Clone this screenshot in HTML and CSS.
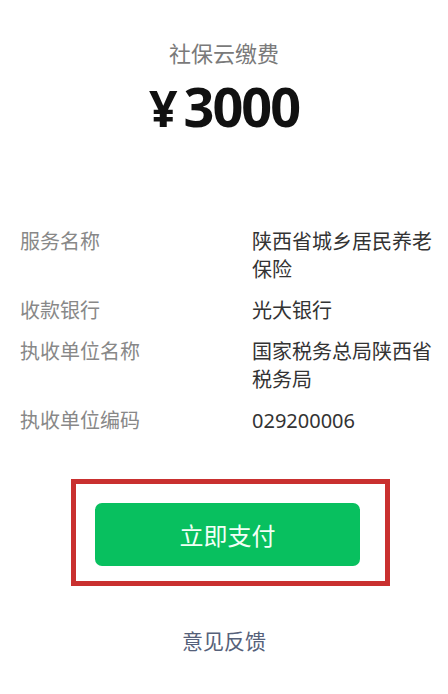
FILE: index.html
```html
<!DOCTYPE html>
<html lang="zh-CN">
<head>
  <meta charset="UTF-8" />
  <meta name="viewport" content="width=device-width, initial-scale=1.0" />
  <title>社保云缴费</title>
  <link rel="stylesheet" href="styles.css">
</head>
<body>
  <div class="head">
    <div class="title">社保云缴费</div>
    <div class="amount"><span class="yen">¥</span>3000</div>
  </div>

  <div class="info">
    <div class="row"><span class="label">服务名称</span><span class="value">陕西省城乡居民养老保险</span></div>
    <div class="row"><span class="label">收款银行</span><span class="value">光大银行</span></div>
    <div class="row"><span class="label">执收单位名称</span><span class="value">国家税务总局陕西省税务局</span></div>
    <div class="row"><span class="label">执收单位编码</span><span class="value">029200006</span></div>
  </div>

  <div class="highlight">
    <button class="pay">立即支付</button>
  </div>

  <div class="feedback">意见反馈</div>
</body>
</html>
```

FILE: styles.css
```css
body {
  margin: 0;
  background: #fff;
  font-family: "Noto Sans", "Noto Sans CJK SC", sans-serif;
}
.head {
  padding-top: 38px;
  text-align: center;
}
.title {
  font-size: 22px;
  line-height: 30px;
  color: #7a7a7a;
}
.amount {
  margin-top: 8px;
  font-size: 54px;
  line-height: 60px;
  font-weight: bold;
  color: #111;
  letter-spacing: -2px;
}
.yen {
  margin-right: 8px;
  font-size: 50px;
}
.info {
  margin-top: 90px;
  padding-left: 20px;
  display: flex;
  flex-direction: column;
  gap: 13px;
}
.row {
  display: flex;
  font-size: 20px;
  line-height: 28px;
}
.label {
  width: 232px;
  flex-shrink: 0;
  color: #888;
}
.value {
  width: 190px;
  color: #333;
}
.highlight {
  box-sizing: border-box;
  width: 319px;
  margin: 44px 0 0 71px;
  padding: 19px 25px 15px 19px;
  border: 5px solid #c9302f;
}
.pay {
  display: block;
  width: 265px;
  height: 63px;
  border: none;
  border-radius: 7px;
  background: #08c05f;
  color: #f2fff6;
  font-family: "Noto Sans CJK SC", sans-serif;
  font-size: 24px;
  cursor: pointer;
}
.feedback {
  margin-top: 40px;
  text-align: center;
  font-size: 21px;
  line-height: 30px;
  color: #56617a;
}
```
